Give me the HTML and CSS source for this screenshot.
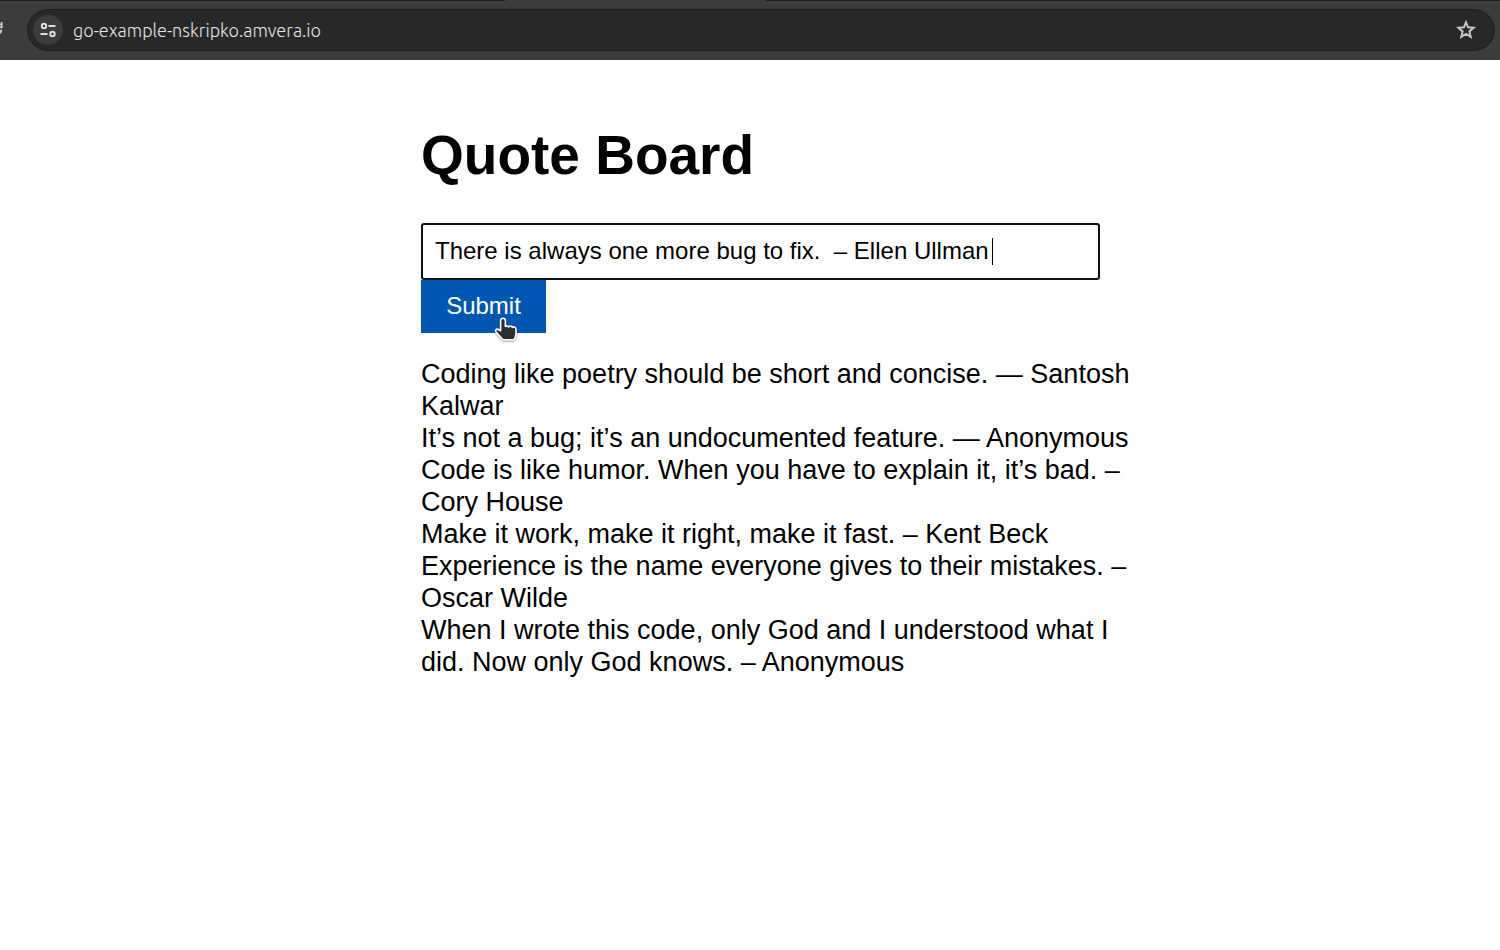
FILE: index.html
```html
<!DOCTYPE html>
<html lang="en">
<head>
<meta charset="utf-8">
<title>Quote Board</title>
<link rel="stylesheet" href="styles.css">
</head>
<body>
<header class="toolbar">
  <svg class="reload" width="4" height="20" viewBox="0 0 4 20" aria-hidden="true"><path d="M0 3.500H.800V2H2.600V8.200H0V6.500H.600V5H0ZM0 9.800H2.400Q2.200 12.500 0 14.500Z" fill="#c7c7c7"/></svg>
  <div class="address">
    <button class="site-info" type="button" aria-label="View site information">
      <svg width="16" height="16" viewBox="0 0 16 16" fill="none" stroke="#dedede" stroke-width="2"><circle cx="4" cy="4" r="2.200"/><path d="M8.500 4H15.500M.500 12H7.500"/><circle cx="12.500" cy="12" r="2.200"/></svg>
    </button>
    <input class="url" type="text" aria-label="Address" value="go-example-nskripko.amvera.io">
    <button class="bookmark" type="button" aria-label="Bookmark this page">
      <svg width="22" height="22" viewBox="0 0 22 22" fill="none" stroke="#c7c7c7" stroke-width="2"><path d="M11 3.300L13.100 8.300L18.600 8.800L14.400 12.400L15.700 17.800L11 14.900L6.300 17.800L7.600 12.400L3.400 8.800L8.900 8.300Z"/></svg>
    </button>
  </div>
  <span class="active-tab"></span>
</header>
<main class="board">
  <h1 class="title">Quote Board</h1>
  <form class="quote-form">
    <div class="field">
      <input class="quote-input" type="text" aria-label="Quote" value="There is always one more bug to fix.  – Ellen Ullman">
      <span class="caret"></span>
    </div>
    <div class="action">
      <button class="submit" type="button">Submit</button>
      <svg class="pointer" width="28" height="30" viewBox="0 0 28 30" aria-hidden="true"><path d="M10 3.200C8.300 3.200 7.600 4.400 7.600 5.700V15.800L5.500 14.500C3.600 13.400 1.800 15.200 3 17L8.600 23.200C9.200 24.300 10 24.800 11 24.800H20C21 24.800 21.600 24.200 21.900 23.400L23 19V14.500C23 11.800 20 11.500 19.300 12.500C18.800 10.500 16 10.500 15.500 12C15 10.800 13 10.800 12.400 11.500V5.700C12.400 4.400 11.600 3.200 10 3.200Z" fill="#2d2d2d" stroke="#fff" stroke-width="1.600" stroke-linejoin="round"/></svg>
    </div>
  </form>
  <div class="quotes">
    <div>Coding like poetry should be short and concise. — Santosh Kalwar</div>
    <div>It’s not a bug; it’s an undocumented feature. — Anonymous</div>
    <div>Code is like humor. When you have to explain it, it’s bad. – Cory House</div>
    <div>Make it work, make it right, make it fast. – Kent Beck</div>
    <div>Experience is the name everyone gives to their mistakes. – Oscar Wilde</div>
    <div>When I wrote this code, only God and I understood what I did. Now only God knows. – Anonymous</div>
  </div>
</main>
</body>
</html>
```
FILE: styles.css
```css
* {
  box-sizing: border-box;
}

body {
  margin: 0;
  background: #fff;
  color: #000;
  font-family: "Liberation Sans", Arial, sans-serif;
}

button {
  border: 0;
  padding: 0;
}

.toolbar {
  position: relative;
  display: flex;
  align-items: center;
  gap: 23px;
  height: 60px;
  padding: 0 5px 1px 0;
  border-top: 1px solid #1f1f1f;
  background: #3c3c3c;
}

.active-tab {
  position: absolute;
  top: -1px;
  left: 505px;
  width: 261px;
  height: 1px;
  background: #3c3c3c;
}

.reload {
  flex: none;
}

.address {
  display: flex;
  flex: 1;
  align-items: center;
  height: 42px;
  padding: 0 17px 0 5px;
  border: 1px solid #1f1f1f;
  border-radius: 21px;
  background: #282828;
}

.site-info {
  display: grid;
  place-items: center;
  width: 30px;
  height: 30px;
  border-radius: 50%;
  background: #3c3c3c;
}

.url {
  flex: 1;
  min-width: 0;
  margin-left: 10px;
  padding: 0;
  border: 0;
  outline: 0;
  background: none;
  color: #e3e3e3;
  font: 300 18px "Ubuntu", "Noto Sans", sans-serif;
}

.bookmark {
  display: grid;
  background: none;
}

.board {
  max-width: 1149px;
  padding: 63px 0 0 421px;
}

.title {
  margin: 0 0 36px;
  font-size: 55px;
  line-height: 64px;
}

.field {
  position: relative;
  max-width: 679px;
}

.quote-input {
  display: block;
  width: 100%;
  height: 57px;
  padding: 0 12px 2px;
  border: 2px solid #101010;
  border-radius: 3px;
  outline: 0;
  color: #000;
  font: 24px "Liberation Sans", Arial, sans-serif;
}

.caret {
  position: absolute;
  top: 15px;
  left: 571px;
  width: 1px;
  height: 27px;
  background: #000;
}

.action {
  position: relative;
  width: 125px;
}

.submit {
  display: block;
  width: 100%;
  height: 53px;
  padding-bottom: 2px;
  background: #0056b3;
  color: #fff;
  font: 24px "Liberation Sans", Arial, sans-serif;
}

.pointer {
  position: absolute;
  top: 35px;
  left: 72px;
  filter: drop-shadow(0 1px 1px #0006);
}

.quotes {
  margin-top: 25px;
  font-size: 27px;
  line-height: 32px;
}
```
